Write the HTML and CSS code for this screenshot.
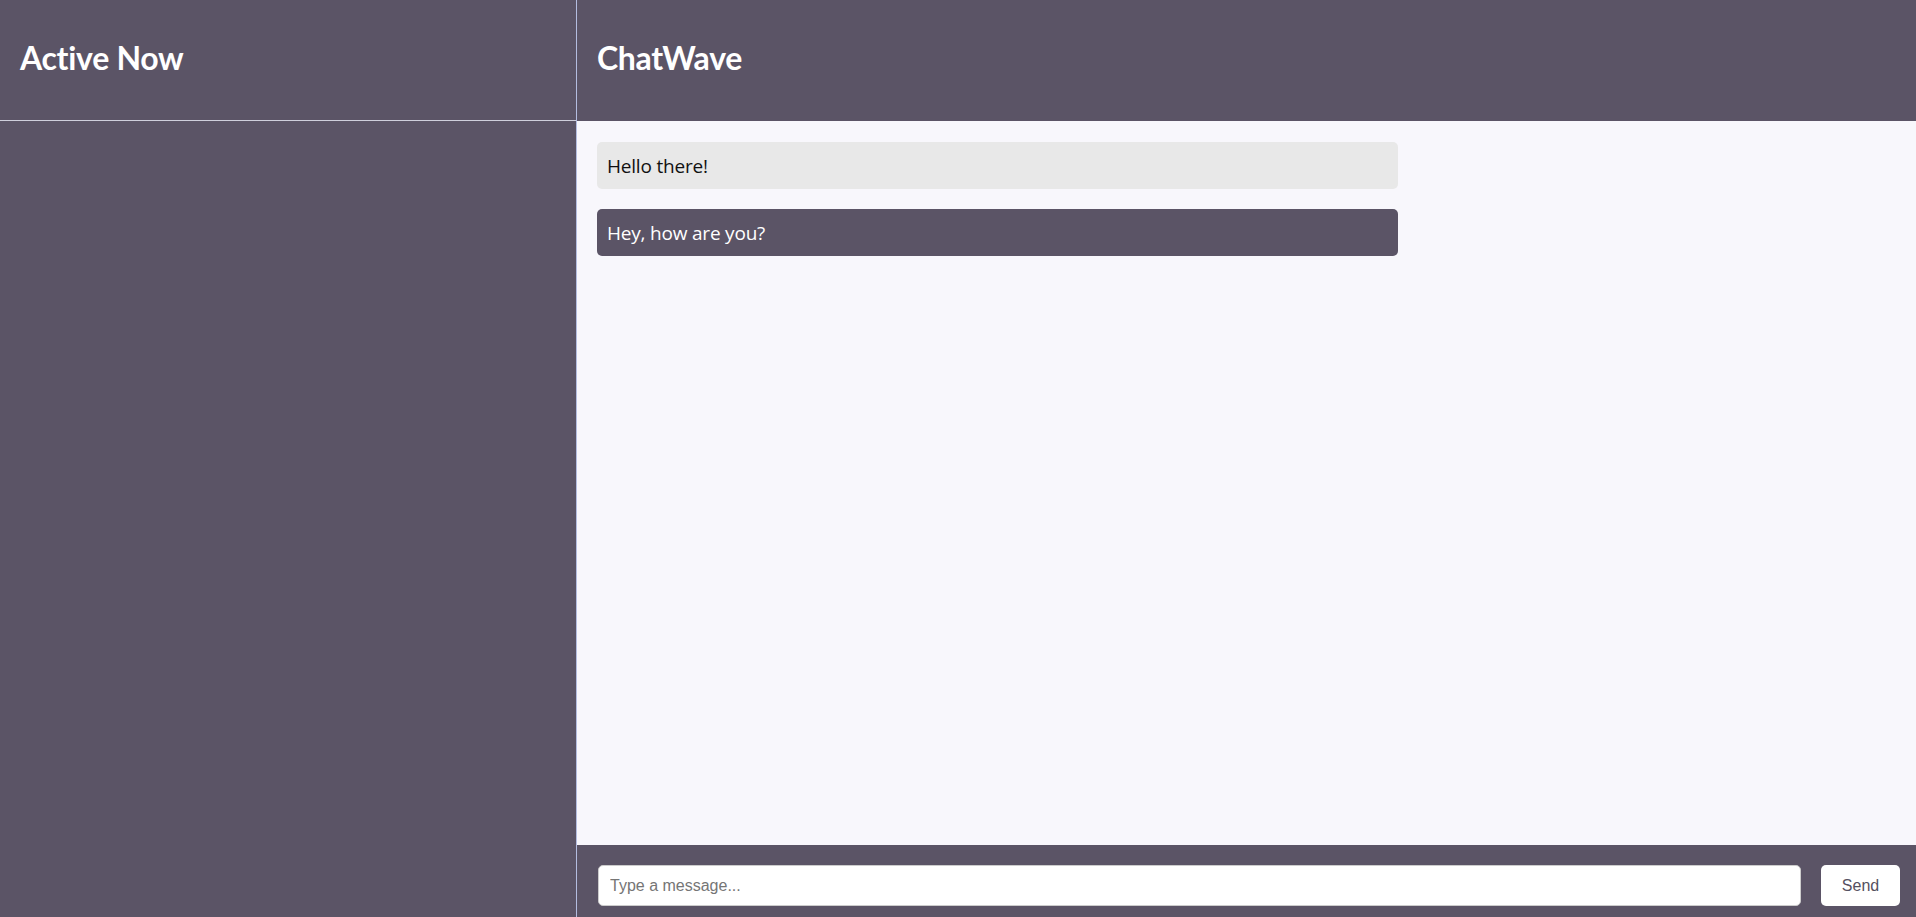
FILE: index.html
```html
<!DOCTYPE html>
<html lang="en">
<head>
<meta charset="utf-8">
<title>ChatWave</title>
<link rel="stylesheet" href="styles.css">
</head>
<body>
<div class="app">
  <aside class="sidebar">
    <div class="sidebar-header"><h1 class="title">Active Now</h1></div>
    <div class="sidebar-body"></div>
  </aside>
  <main class="chat">
    <div class="chat-header"><h1 class="title">ChatWave</h1></div>
    <div class="messages">
      <div class="bubble bubble-in">Hello there!</div>
      <div class="bubble bubble-out">Hey, how are you?</div>
    </div>
    <div class="composer">
      <input class="composer-input" type="text" placeholder="Type a message...">
      <button class="composer-send" type="button">Send</button>
    </div>
  </main>
</div>
</body>
</html>
```

FILE: styles.css
```css
html, body {
  margin: 0;
  padding: 0;
  height: 100%;
  overflow: hidden;
}
body {
  font-family: "Open Sans", "Noto Sans", sans-serif;
  background: #5b5466;
}
.app {
  display: flex;
  height: 926px;
}
.sidebar {
  width: 576px;
  flex: none;
  background: #5b5466;
  border-right: 1px solid #b4bde0;
  display: flex;
  flex-direction: column;
}
.sidebar-header {
  height: 120px;
  border-bottom: 1px solid #cfcfdc;
  display: flex;
  align-items: center;
  padding: 0 20px;
}
.title {
  margin: 0;
  color: #ffffff;
  font-family: "Lato", "Open Sans", sans-serif;
  font-weight: 700;
  font-size: 32px;
  letter-spacing: -0.3px;
  padding-bottom: 6px;
}
.chat {
  flex: 1;
  display: flex;
  flex-direction: column;
  min-width: 0;
}
.chat-header {
  height: 121px;
  background: #5b5466;
  display: flex;
  align-items: center;
  padding: 0 20px;
  box-sizing: border-box;
}
.messages {
  flex: 1;
  background: #f8f7fc;
  padding: 21px 20px;
  display: flex;
  flex-direction: column;
  gap: 20px;
}
.bubble {
  width: 801px;
  box-sizing: border-box;
  height: 47px;
  padding: 0 10px;
  display: flex;
  align-items: center;
  border-radius: 5px;
  font-size: 19px;
  letter-spacing: -0.2px;
}
.bubble-in {
  background: #e8e8e8;
  color: #111111;
}
.bubble-out {
  background: #5b5466;
  color: #ffffff;
}
.composer {
  background: #5b5466;
  display: flex;
  gap: 20px;
  padding: 20px 16px 20px 21px;
  height: 81px;
  box-sizing: border-box;
}
.composer-input {
  flex: 1;
  height: 41px;
  box-sizing: border-box;
  border: 1px solid #cccccc;
  border-radius: 5px;
  padding: 0 11px;
  font-family: "Liberation Sans", Arial, sans-serif;
  font-size: 16px;
  color: #333;
  background: #fff;
  outline: none;
}
.composer-input::placeholder {
  color: #757575;
}
.composer-send {
  width: 79px;
  height: 41px;
  border: none;
  border-radius: 5px;
  background: #ffffff;
  color: #555060;
  font-family: "Liberation Sans", Arial, sans-serif;
  font-size: 16px;
  cursor: pointer;
}
```
